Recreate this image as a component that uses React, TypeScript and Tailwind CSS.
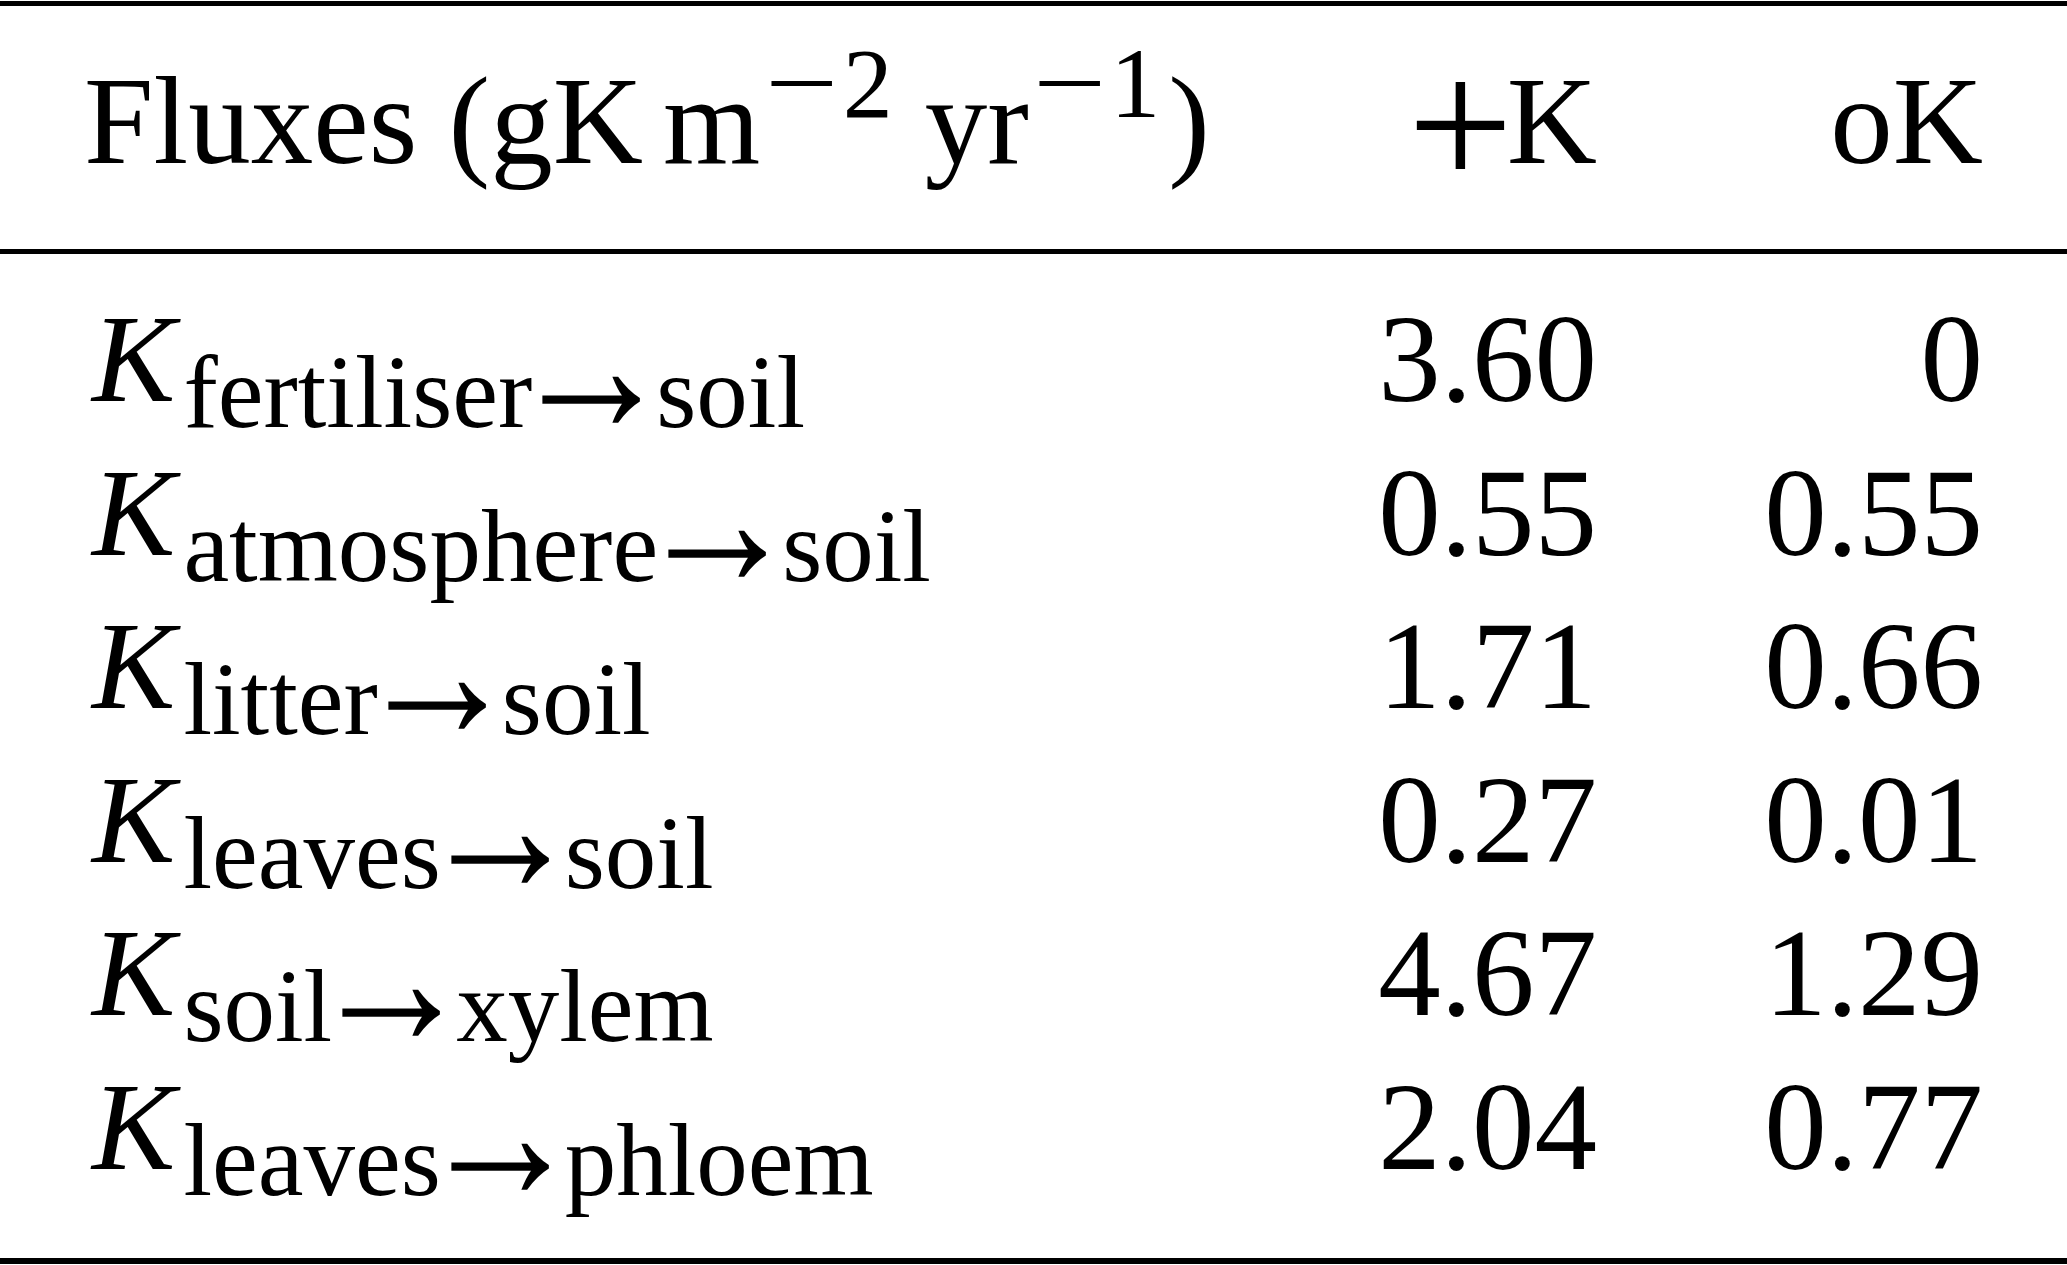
const rows = [
  { from: "fertiliser", to: "soil", plus: "3.60", zero: "0" },
  { from: "atmosphere", to: "soil", plus: "0.55", zero: "0.55" },
  { from: "litter", to: "soil", plus: "1.71", zero: "0.66" },
  { from: "leaves", to: "soil", plus: "0.27", zero: "0.01" },
  { from: "soil", to: "xylem", plus: "4.67", zero: "1.29" },
  { from: "leaves", to: "phloem", plus: "2.04", zero: "0.77" },
];

function Sup({ value }: { value: string }) {
  return (
    <span className="relative -top-[46px] text-[100px] leading-none">
      <span className="inline-block origin-left scale-x-[1.3] mr-[21px]">−</span>
      {value}
    </span>
  );
}

export default function App() {
  return (
    <div className="w-[2067px] h-[1265px] bg-white text-black font-['Liberation_Serif','Times_New_Roman',serif] overflow-hidden">
      {/* top rule */}
      <div className="mt-[1px] h-[5px] bg-black" />

      {/* header */}
      <div className="h-[243px] pt-[46px] px-[84px] flex text-[125px] leading-[138px] whitespace-nowrap">
        <div className="flex-1">
          Fluxes (gK
          <span className="ml-[20px]">m</span>
          <span className="ml-[5px]">
            <Sup value="2" />
          </span>
          <span className="ml-[32px]">yr</span>
          <span className="ml-[4px]">
            <Sup value="1" />
          </span>
          <span className="ml-[8px]">)</span>
        </div>
        <div className="w-[300px] text-right">
          <span className="inline-block leading-none mr-[11px] origin-[35px_56px] scale-[1.5]">+</span>K
        </div>
        <div className="w-[386px] text-right">oK</div>
      </div>

      {/* mid rule */}
      <div className="h-[5px] bg-black" />

      <div className="pt-[29px]">
        {rows.map((row, i) => (
          <div
            key={i}
            className="h-[153.6px] px-[84px] flex text-[125px] leading-[153.6px] whitespace-nowrap"
          >
            <div className="flex-1 pl-[8px]">
              <span className="italic">K</span>
              <span className="relative top-[26px] ml-[8px] text-[103px] leading-none">
                {row.from}
                <span className="inline-block ml-[8px] mr-[13px] origin-[52px_81px] scale-x-[1.6] scale-y-[1.9]">
                  →
                </span>
                {row.to}
              </span>
            </div>
            <div className="w-[300px] text-right">{row.plus}</div>
            <div className="w-[386px] text-right">{row.zero}</div>
          </div>
        ))}
      </div>

      {/* bottom rule */}
      <div className="mt-[53.4px] h-[6px] bg-black" />
    </div>
  );
}
